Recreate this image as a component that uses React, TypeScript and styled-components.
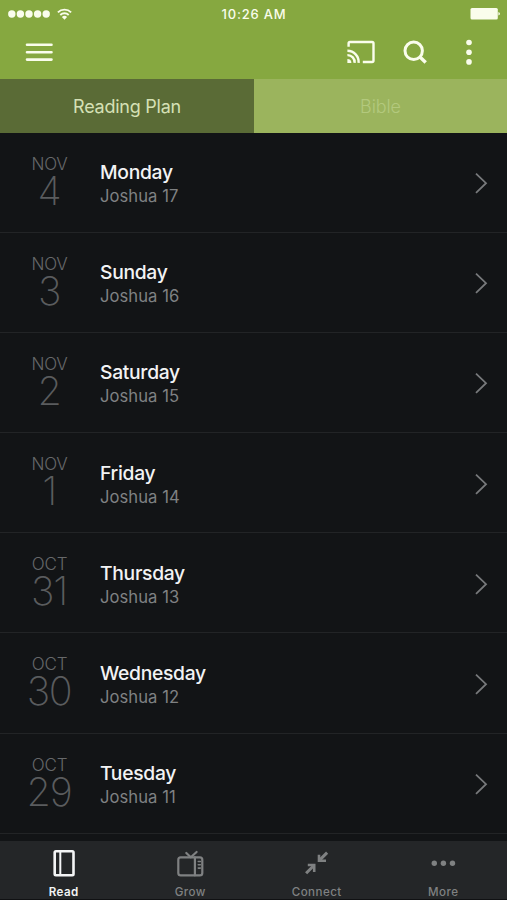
import React from 'react';
import styled, { createGlobalStyle } from 'styled-components';

const GlobalStyle = createGlobalStyle`
  * { box-sizing: border-box; }
  body {
    margin: 0;
    background: #121416;
    font-family: Inter, "Liberation Sans", sans-serif;
    overflow: hidden;
  }
`;

const Screen = styled.div`
  display: flex;
  flex-direction: column;
  width: 507px;
  height: 900px;
  overflow: hidden;
  background: #121416;
`;

const Header = styled.header`
  flex: none;
  height: 79px;
  background: #86a840;
  color: #fafdec;
`;

const StatusBar = styled.div`
  display: grid;
  grid-template-columns: 1fr auto 1fr;
  align-items: center;
  height: 27px;
  padding: 0 7px 0 8px;
`;

const Signal = styled.div`
  display: flex;
  align-items: center;
  gap: 7px;
`;

const Clock = styled.div`
  padding-top: 1px;
  font-size: 13px;
  font-weight: 500;
  letter-spacing: 0.8px;
  white-space: nowrap;
`;

const Battery = styled.svg`
  justify-self: end;
`;

const Toolbar = styled.div`
  display: flex;
  align-items: center;
  justify-content: space-between;
  height: 50px;
  padding: 0 34.5px 0 25px;
`;

const Actions = styled.div`
  display: flex;
  align-items: center;
`;

const IconButton = styled.button<{ $gap?: number }>`
  display: flex;
  margin: 0 0 0 ${(p) => p.$gap ?? 0}px;
  padding: 0;
  border: 0;
  background: none;
  color: inherit;
`;

const Tabs = styled.div`
  display: grid;
  grid-template-columns: 254px 1fr;
  flex: none;
  height: 53.5px;
`;

const Tab = styled.button<{ $active?: boolean }>`
  padding: 2px 0 0;
  border: 0;
  background: ${(p) => (p.$active ? '#5a6b36' : '#9bb45d')};
  color: ${(p) => (p.$active ? '#d5e0b5' : '#b3c97d')};
  font: ${(p) => (p.$active ? 400 : 300)} 18px/51px Inter, sans-serif;
  letter-spacing: ${(p) => (p.$active ? '-0.25px' : '-0.1px')};
`;

const List = styled.main`
  flex: 1;
  min-height: 0;
  overflow: hidden;
`;

const Row = styled.article`
  display: grid;
  grid-template-columns: 100px 1fr auto;
  height: 100.2px;
  padding-right: 19px;
  border-bottom: 1px solid #222426;
`;

const DateBlock = styled.div`
  display: flex;
  flex-direction: column;
  align-items: center;
  padding-top: 22px;
  padding-right: 1px;
`;

const Month = styled.div`
  color: #66686a;
  font-size: 17px;
  font-weight: 300;
  line-height: 18px;
  letter-spacing: -0.15px;
`;

const Day = styled.div`
  margin-right: 1px;
  color: #5a5c5e;
  font-size: 39.5px;
  font-weight: 200;
  line-height: 36px;
  letter-spacing: -1.3px;
`;

const Details = styled.div`
  padding-top: 27.6px;
`;

const Title = styled.div`
  color: #f2f3f4;
  font-size: 19.3px;
  font-weight: 500;
  line-height: 24px;
  letter-spacing: -0.3px;
`;

const Passage = styled.div`
  color: #7f8183;
  font-size: 16.6px;
  line-height: 24px;
  letter-spacing: 0.05px;
`;

const Chevron = styled.svg`
  align-self: center;
  margin-top: 2px;
  color: #77797b;
`;

const BottomNav = styled.nav`
  display: grid;
  grid-template-columns: repeat(4, 126.5px);
  flex: none;
  height: 59.5px;
  padding-left: 0.5px;
  background: #242628;
  border-bottom: 1px solid #101113;
`;

const NavItem = styled.button<{ $active?: boolean }>`
  display: flex;
  flex-direction: column;
  align-items: center;
  padding: 6.5px 0 0;
  border: 0;
  background: none;
  color: ${(p) => (p.$active ? '#f3f4f5' : '#7f8182')};
`;

const NavLabel = styled.span<{ $active?: boolean }>`
  margin-top: 4.5px;
  font: ${(p) => (p.$active ? 600 : 500)} 11.6px/16px Inter, sans-serif;
  letter-spacing: 0.45px;
`;

const DAYS = [
  ['NOV', '4', 'Monday', 'Joshua 17'],
  ['NOV', '3', 'Sunday', 'Joshua 16'],
  ['NOV', '2', 'Saturday', 'Joshua 15'],
  ['NOV', '1', 'Friday', 'Joshua 14'],
  ['OCT', '31', 'Thursday', 'Joshua 13'],
  ['OCT', '30', 'Wednesday', 'Joshua 12'],
  ['OCT', '29', 'Tuesday', 'Joshua 11'],
];

const stroke = {
  fill: 'none',
  stroke: 'currentColor',
  strokeLinecap: 'round' as const,
  strokeLinejoin: 'round' as const,
};

const BookIcon = () => (
  <svg width="30" height="32" viewBox="0 0 30 32" {...stroke} strokeWidth="2.6">
    <rect x="5.7" y="4.3" width="18.8" height="24" rx="1.2" />
    <path d="M11.3 4.6v23.5" strokeWidth="2" />
  </svg>
);

const TvIcon = () => (
  <svg width="30" height="32" viewBox="0 0 30 32" {...stroke} strokeWidth="2.2">
    <rect x="3.3" y="10.3" width="24" height="18" rx="2.4" />
    <path d="M19.9 10.3v18M11.3 6l4.5 4.3L21.6 5" />
    <path d="M23.3 14.5h2M23.3 17.8h2M23.3 21.1h2" strokeWidth="1.6" />
  </svg>
);

const ConnectIcon = () => (
  <svg width="30" height="32" viewBox="0 0 30 32" {...stroke} strokeWidth="2.6" strokeLinecap="butt" strokeLinejoin="miter">
    <path d="M25.1 5.6l-7 7M4.1 26.2l7-7" strokeWidth="3" />
    <path d="M17 7.8v6h7M5.8 18h6.4v7" />
  </svg>
);

const MoreIcon = () => (
  <svg width="30" height="32" viewBox="0 0 30 32" fill="currentColor">
    <circle cx="6.3" cy="16.3" r="2.7" />
    <circle cx="15.4" cy="16.3" r="2.7" />
    <circle cx="24.5" cy="16.3" r="2.7" />
  </svg>
);

const NAV = [
  { label: 'Read', Icon: BookIcon },
  { label: 'Grow', Icon: TvIcon },
  { label: 'Connect', Icon: ConnectIcon },
  { label: 'More', Icon: MoreIcon },
];

export default function App() {
  return (
    <Screen>
      <GlobalStyle />
      <Header>
        <StatusBar>
          <Signal>
            <svg width="42" height="8" viewBox="0 0 42 8" fill="currentColor">
              {[3.8, 12.4, 21, 29.6, 38.2].map((x) => (
                <circle key={x} cx={x} cy="4" r="3.7" />
              ))}
            </svg>
            <svg width="15" height="12" viewBox="0 0 15 12" {...stroke} strokeWidth="1.9" strokeLinecap="butt">
              <path d="M.9 4.4a9.3 9.3 0 0 1 13.2 0M3.3 7a6 6 0 0 1 8.4 0" />
              <path d="M7.5 11.7L4.9 9.1a3.7 3.7 0 0 1 5.2 0z" fill="currentColor" stroke="none" />
            </svg>
          </Signal>
          <Clock>10:26 AM</Clock>
          <Battery width="30" height="12" viewBox="0 0 30 12" fill="currentColor">
            <rect x="0.5" y="0" width="27.3" height="11.4" rx="1.5" />
            <path d="M28.4 3.9q1.6.5 1.6 1.8t-1.6 1.8z" />
          </Battery>
        </StatusBar>
        <Toolbar>
          <IconButton aria-label="Menu">
            <svg width="28" height="20" viewBox="0 0 28 20" {...stroke} strokeWidth="2.6">
              <path d="M2 2.7h24.5M2 10.2h24.5M2 17.6h24.5" />
            </svg>
          </IconButton>
          <Actions>
            <IconButton aria-label="Cast">
              <svg width="30" height="24" viewBox="0 0 30 24" {...stroke} strokeWidth="2.4" strokeLinecap="butt">
                <path d="M2.6 6.8V3.4Q2.6 2 4 2h22.1q1.4 0 1.4 1.4v17.2q0 1.4-1.4 1.4h-9.3" />
                <path d="M1.4 10.8A11.2 11.2 0 0 1 12.6 22.9M1.4 15.1A7 7 0 0 1 8.6 22.9" />
                <path d="M1.4 18.9a4 4 0 0 1 4 4h-4z" fill="currentColor" stroke="none" />
              </svg>
            </IconButton>
            <IconButton aria-label="Search" $gap={27}>
              <svg width="24" height="24" viewBox="0 0 24 24" {...stroke} strokeWidth="3" strokeLinecap="butt">
                <circle cx="10.7" cy="10.8" r="8.7" />
                <path d="M16.7 16.7l6 5.8" strokeWidth="3.4" />
              </svg>
            </IconButton>
            <IconButton aria-label="Options" $gap={38}>
              <svg width="8" height="26" viewBox="0 0 8 26" fill="currentColor">
                <circle cx="4" cy="3.5" r="2.8" />
                <circle cx="4" cy="13.2" r="2.8" />
                <circle cx="4" cy="22.9" r="2.8" />
              </svg>
            </IconButton>
          </Actions>
        </Toolbar>
      </Header>
      <Tabs>
        <Tab $active>Reading Plan</Tab>
        <Tab>Bible</Tab>
      </Tabs>
      <List>
        {DAYS.map(([month, day, title, passage]) => (
          <Row key={title}>
            <DateBlock>
              <Month>{month}</Month>
              <Day>{day}</Day>
            </DateBlock>
            <Details>
              <Title>{title}</Title>
              <Passage>{passage}</Passage>
            </Details>
            <Chevron width="14" height="22" viewBox="0 0 14 22" {...stroke} strokeWidth="1.8" strokeLinecap="butt" strokeLinejoin="miter">
              <path d="M2 1.6l10 9.6L2 20.8" />
            </Chevron>
          </Row>
        ))}
      </List>
      <BottomNav>
        {NAV.map(({ label, Icon }, i) => (
          <NavItem key={label} $active={i === 0}>
            <Icon />
            <NavLabel $active={i === 0}>{label}</NavLabel>
          </NavItem>
        ))}
      </BottomNav>
    </Screen>
  );
}
